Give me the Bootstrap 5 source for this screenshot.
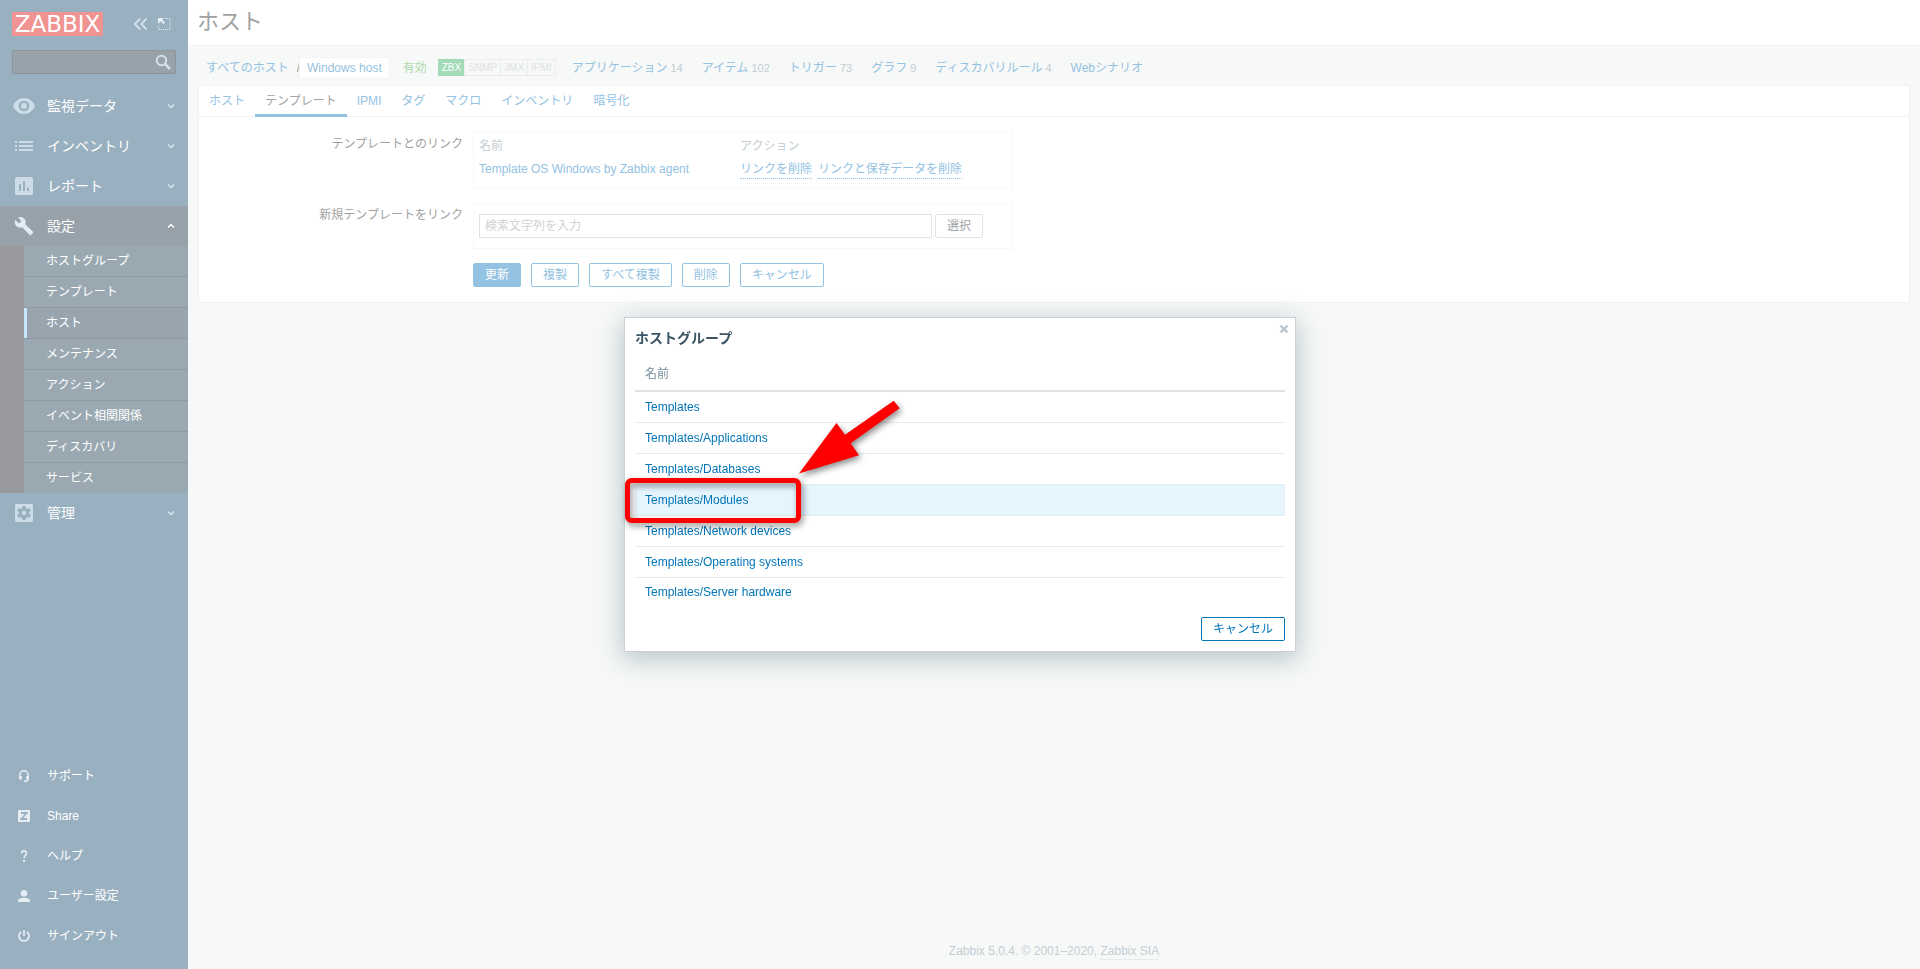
<!DOCTYPE html>
<html lang="ja">
<head>
<meta charset="utf-8">
<meta name="viewport" content="width=device-width, initial-scale=1">
<title>ホスト - Zabbix</title>
<link href="https://cdn.jsdelivr.net/npm/bootstrap@5.3.0/dist/css/bootstrap.min.css" rel="stylesheet">
<style>
  :root { --link: #94c2e2; --line: #f1f3f3; --page: #f7f9f8; --muted: #c3cdd3; --text: #9fa2a3; --side: #99b0c0; }
  body { font-family: "Liberation Sans", "Noto Sans CJK JP", sans-serif; font-size: 12px; line-height: 16px; background: var(--page); color: var(--text); }
  a { color: var(--link); text-decoration: none; }
  svg { display: block; flex: none; }

  /* sidebar */
  .side { width: 188px; flex: none; background: var(--side); color: #fff; padding-bottom: 13px; }
  .side a { color: #fff; }
  .side-head { padding: 12px 17px 0 12px; height: 50px; }
  .logo { background: #f09393; width: 91px; height: 24px; font: 23px/25px "DejaVu Sans", sans-serif; color: #fff; text-align: center; }
  .side-search { margin: 0 12px 12px; height: 24px; background: #97a2aa; border: 1px solid #8f9598; border-radius: 2px; }
  .side-search input { background: none; border: 0; outline: 0; min-width: 0; color: #fff; }
  .side-link { height: 40px; padding: 0 14px 0 12px; font-size: 14px; line-height: 20px; }
  .side-link .ico, .foot-link .ico { width: 24px; margin-right: 11px; display: flex; justify-content: center; color: #cddce7; flex: none; }
  .side-link.open { background: #97a2aa; }
  .side-link.open .ico { color: #e0edf7; }
  .sub-list { background: #999a9e; padding-left: 24px; }
  .sub-list li { height: 31px; border-bottom: 1px solid #9298a0; background: #9aa9b1; }
  .sub-list li:last-child { height: 30px; border-bottom: 0; }
  .sub-list a { display: block; height: 30px; padding: 0 19px; border-left: 3px solid transparent; line-height: 30px; }
  .sub-list a.on { background: #98a5af; border-color: #c5e6fb; }
  .foot-link { height: 40px; padding: 0 12px; color: #f2f5f7; }
  .foot-link .ico { color: #e6edf2; }

  /* page header */
  .page-head { height: 46px; background: #fff; border-bottom: 1px solid #f0f2f2; padding: 0 9px; }
  .page-head h1 { font-size: 22px; line-height: 44px; font-weight: 400; margin: 0; color: var(--text); }
  .crumbs { height: 39px; padding: 4px 18px 0; line-height: 20px; }
  .crumbs .here { background: #fff; padding: 0 7px; box-shadow: 0 0 0 1px #f3f5f5; }
  .crumbs .state { color: #afd9ae; margin: 0 12px 0 14px; }
  .crumbs .count { color: var(--muted); margin-left: 3px; font-size: 11px; }
  .crumb-links { column-gap: 19px; }
  .if-box { font-size: 10px; line-height: 16px; border: 1px solid #ebedee; color: #e0e2e3; margin-left: -1px; padding: 0 3px; height: 17px; }
  .if-box.on { background: #a3dbb8; border-color: #a3dbb8; color: #fff; }

  /* form */
  .panel { background: #fff; border: 1px solid var(--line); margin: 0 10px; padding-bottom: 15px; }
  .tab-row { height: 31px; border-bottom: 1px solid var(--line); }
  .tab-row a { padding: 0 10px; height: 31px; border-bottom: 3px solid transparent; display: block; line-height: 30px; }
  .tab-row a.on { color: var(--text); border-color: var(--link); }
  .form-body { padding-top: 1px; }
  .form-line { gap: 9px; margin-top: 14px; }
  .form-line > .lab { width: 264px; text-align: right; flex: none; padding-top: 4px; line-height: 16px; }
  .frame { border: 1px solid #f6f7f7; width: 540px; padding: 5px; margin-left: 1px; }
  .frame.tall { padding-bottom: 9px; }
  .frame.pickrow { padding: 10px 5px; gap: 3px; }
  .link-table { width: 100%; }
  .link-table th { font-weight: 400; color: var(--muted); height: 16px; padding: 0; }
  .link-table td { padding: 6px 0 0; line-height: 17px; }
  .link-table th:first-child { width: 261px; }
  .dotted { border-bottom: 1px dotted var(--link); display: inline-block; line-height: 18px; margin-right: 6px; }
  .find { width: 453px; height: 24px; border: 1px solid #dfe4e7; padding: 0 5px; outline: 0; }
  .find::placeholder { color: #d0d2d3; opacity: 1; }
  .btn-line { gap: 10px; margin-left: 1px; }
  .zbtn { height: 24px; font-size: 12px; line-height: 20px; padding: 0 11px; border-radius: 2px; --bs-btn-border-color: var(--link); --bs-btn-color: var(--link); background: #fff; }
  .zbtn.fill { background: var(--link); color: #fff; }
  .zbtn.grey { --bs-btn-border-color: #dfe4e7; --bs-btn-color: var(--text); }
  .zbtn.strong { --bs-btn-border-color: #0275b8; --bs-btn-color: #0275b8; }
  .page-foot { color: var(--muted); padding-bottom: 9px; line-height: 18px; }
  .page-foot a { color: var(--muted); border-bottom: 1px solid #e6eaea; display: inline-block; line-height: 15px; }

  /* dialogue */
  .dlg { --bs-modal-width: 672px; }
  .dlg .modal-content { border: 1px solid #c9d3d7; border-radius: 0; padding: 0 10px 10px; box-shadow: 0 6px 24px 2px rgba(70, 100, 115, .34); }
  .dlg h2 { font-size: 14px; font-weight: 700; line-height: 20px; margin: 10px 0 12px; color: #3c5563; }
  .dlg .btn-x { position: absolute; top: 6px; right: 6px; padding: 0; border: 0; background: none; color: #b9c5cc; }
  .pick { width: 100%; margin-bottom: 10px; }
  .pick th { font-weight: 400; color: #768d99; height: 31px; padding: 0 10px 2px; border-bottom: 2px solid #dce2e6; }
  .pick td { height: 31px; padding: 0 10px; border-bottom: 1px solid #e8ebed; }
  .pick tr:last-child td { border-bottom: 0; height: 30px; }
  .pick a { color: #0275b8; }
  .pick .hot { background: #e6f4fe; }
  .note { position: absolute; left: 0; top: 80px; pointer-events: none; filter: drop-shadow(2px 3px 3px rgba(0, 0, 0, .45)); }
</style>
</head>
<body>
<div class="d-flex min-vh-100">
  <aside class="side d-flex flex-column">
    <div class="side-head d-flex justify-content-between">
      <a href="#" class="logo">ZABBIX</a>
      <div class="d-flex gap-2 pt-1">
        <a href="#" aria-label="隠す"><svg width="18" height="16" viewBox="0 0 18 16" fill="none" stroke="#d9e5ee" stroke-width="1.800"><path d="M9 2.500 4 8 9 13.500M15.500 2.500 10.500 8 15.500 13.500"/></svg></a>
        <a href="#" aria-label="小さくする"><svg width="14" height="16" viewBox="0 0 14 16"><path d="M1 2h6L5.200 3.700 8 6.500 6.500 8 3.700 5.200 1 8z" fill="#e6eff5"/><path d="M8 2.500h5v11H1.500V9" fill="none" stroke="#e6eff5" stroke-dasharray="1 1"/></svg></a>
      </div>
    </div>
    <form class="side-search d-flex align-items-center">
      <input type="text" class="flex-fill" aria-label="検索">
      <svg width="22" height="20" viewBox="0 0 22 20" fill="none" stroke="#d5e2ec"><circle cx="8.500" cy="8.500" r="4.700" stroke-width="2"/><path d="m12 12 5 5" stroke-width="2.500"/></svg>
    </form>
    <nav>
      <a href="#" class="side-link d-flex align-items-center"><span class="ico"><svg width="22" height="16" viewBox="0 0 22 16"><path d="M11 0C6 0 1.800 3.300 0 8c1.800 4.700 6 8 11 8s9.200-3.300 11-8C20.200 3.300 16 0 11 0zm0 13.300a5.300 5.300 0 1 1 0-10.600 5.300 5.300 0 0 1 0 10.600zM11 5a3 3 0 1 0 0 6 3 3 0 0 0 0-6z" fill="currentColor"/></svg></span><span class="flex-fill">監視データ</span><svg width="6" height="6" viewBox="0 0 6 6"><path d="M0 1.500 3 4.500 6 1.500" fill="none" stroke="#d9e5ee" stroke-width="1.500"/></svg></a>
      <a href="#" class="side-link d-flex align-items-center"><span class="ico"><svg width="18" height="12" viewBox="0 0 18 12"><path d="M0 1h2v2H0zM4 1h14v2H4zM0 5h2v2H0zM4 5h14v2H4zM0 9h2v2H0zM4 9h14v2H4z" fill="currentColor"/></svg></span><span class="flex-fill">インベントリ</span><svg width="6" height="6" viewBox="0 0 6 6"><path d="M0 1.500 3 4.500 6 1.500" fill="none" stroke="#d9e5ee" stroke-width="1.500"/></svg></a>
      <a href="#" class="side-link d-flex align-items-center"><span class="ico"><svg width="18" height="18" viewBox="0 0 18 18"><path fill-rule="evenodd" d="M2 0h14a2 2 0 0 1 2 2v14a2 2 0 0 1-2 2H2a2 2 0 0 1-2-2V2a2 2 0 0 1 2-2zM4 7v7h2V7zM8 4v10h2V4zM12 10.500V14h2v-3.500z" fill="currentColor"/></svg></span><span class="flex-fill">レポート</span><svg width="6" height="6" viewBox="0 0 6 6"><path d="M0 1.500 3 4.500 6 1.500" fill="none" stroke="#d9e5ee" stroke-width="1.500"/></svg></a>
      <a href="#" class="side-link open d-flex align-items-center"><span class="ico"><svg width="20" height="20" viewBox="0 0 24 24"><path d="M22.700 19l-9.100-9.100c.9-2.300.4-5-1.500-6.900-2-2-5-2.400-7.400-1.300L9 6 6 9 1.600 4.700C.4 7.100.9 10.100 2.900 12.100c1.900 1.900 4.600 2.400 6.900 1.500l9.100 9.100c.4.4 1 .4 1.400 0l2.300-2.300c.5-.4.5-1.100.1-1.400z" fill="currentColor"/></svg></span><span class="flex-fill">設定</span><svg width="6" height="6" viewBox="0 0 6 6"><path d="M0 4.500 3 1.500 6 4.500" fill="none" stroke="#fff" stroke-width="1.500"/></svg></a>
      <ul class="sub-list list-unstyled mb-0">
        <li><a href="#">ホストグループ</a></li>
        <li><a href="#">テンプレート</a></li>
        <li><a href="#" class="on">ホスト</a></li>
        <li><a href="#">メンテナンス</a></li>
        <li><a href="#">アクション</a></li>
        <li><a href="#">イベント相関関係</a></li>
        <li><a href="#">ディスカバリ</a></li>
        <li><a href="#">サービス</a></li>
      </ul>
      <a href="#" class="side-link d-flex align-items-center"><span class="ico"><svg width="18" height="18" viewBox="0 0 18 18"><rect width="18" height="18" rx="1.500" fill="currentColor"/><g fill="#99b0c0"><circle cx="9" cy="9" r="5.200"/><path d="M7.200 2h3.600v14H7.200z"/><path d="M7.200 2h3.600v14H7.200z" transform="rotate(60 9 9)"/><path d="M7.200 2h3.600v14H7.200z" transform="rotate(120 9 9)"/></g><circle cx="9" cy="9" r="2.200" fill="currentColor"/></svg></span><span class="flex-fill">管理</span><svg width="6" height="6" viewBox="0 0 6 6"><path d="M0 1.500 3 4.500 6 1.500" fill="none" stroke="#d9e5ee" stroke-width="1.500"/></svg></a>
    </nav>
    <nav class="mt-auto">
      <a href="#" class="foot-link d-flex align-items-center"><span class="ico"><svg width="12" height="12" viewBox="0 0 12 12"><path d="M1.800 7.500V5a4.200 4.200 0 0 1 8.400 0v4.500L8.500 11.200H6" fill="none" stroke="currentColor" stroke-width="1.400"/><path d="M1 6h2.800v3.500H1zM8.200 6H11v3.500H8.200z" fill="currentColor"/></svg></span>サポート</a>
      <a href="#" class="foot-link d-flex align-items-center"><span class="ico"><svg width="12" height="12" viewBox="0 0 12 12"><rect width="12" height="12" rx="1" fill="currentColor"/><path d="M3 3h5.500L3.500 9H9" fill="none" stroke="#99b0c0" stroke-width="1.800"/></svg></span>Share</a>
      <a href="#" class="foot-link d-flex align-items-center"><span class="ico"><svg width="8" height="12" viewBox="0 0 8 12"><path d="M1.500 3.500C1.500 0 6.500.2 6.500 3.200 6.500 5.500 4 5.500 4 8.300" fill="none" stroke="currentColor" stroke-width="1.700"/><path d="M3 10h2v2H3z" fill="currentColor"/></svg></span>ヘルプ</a>
      <a href="#" class="foot-link d-flex align-items-center"><span class="ico"><svg width="12" height="12" viewBox="0 0 12 12" fill="currentColor"><circle cx="6" cy="3.200" r="3.200"/><path d="M0 12V10.500C0 8.500 3.500 7.700 6 7.700s6 .8 6 2.800V12z"/></svg></span>ユーザー設定</a>
      <a href="#" class="foot-link d-flex align-items-center"><span class="ico"><svg width="12" height="12" viewBox="0 0 12 12" fill="none" stroke="currentColor" stroke-width="1.700"><path d="M6 0v6M3 2A5 5 0 1 0 9 2"/></svg></span>サインアウト</a>
    </nav>
  </aside>

  <div class="flex-fill d-flex flex-column">
    <header class="page-head"><h1>ホスト</h1></header>
    <div class="crumbs d-flex align-items-center">
      <a href="#">すべてのホスト</a><span class="ms-2">/</span><a href="#" class="here">Windows host</a>
      <span class="state">有効</span>
      <div class="d-flex me-3"><span class="if-box on">ZBX</span><span class="if-box">SNMP</span><span class="if-box">JMX</span><span class="if-box">IPMI</span></div>
      <nav class="crumb-links d-flex">
        <span><a href="#">アプリケーション</a><span class="count">14</span></span>
        <span><a href="#">アイテム</a><span class="count">102</span></span>
        <span><a href="#">トリガー</a><span class="count">73</span></span>
        <span><a href="#">グラフ</a><span class="count">9</span></span>
        <span><a href="#">ディスカバリルール</a><span class="count">4</span></span>
        <a href="#">Webシナリオ</a>
      </nav>
    </div>
    <main class="panel">
      <nav class="tab-row d-flex">
        <a href="#">ホスト</a><a href="#" class="on">テンプレート</a><a href="#">IPMI</a><a href="#">タグ</a><a href="#">マクロ</a><a href="#">インベントリ</a><a href="#">暗号化</a>
      </nav>
      <form class="form-body">
        <div class="form-line d-flex">
          <span class="lab">テンプレートとのリンク</span>
          <div class="frame tall">
            <table class="link-table">
              <thead><tr><th>名前</th><th>アクション</th></tr></thead>
              <tbody><tr><td><a href="#">Template OS Windows by Zabbix agent</a></td><td><a href="#" class="dotted">リンクを削除</a><a href="#" class="dotted">リンクと保存データを削除</a></td></tr></tbody>
            </table>
          </div>
        </div>
        <div class="form-line d-flex">
          <label class="lab" for="tpl">新規テンプレートをリンク</label>
          <div class="frame pickrow d-flex">
            <input type="text" class="find" id="tpl" placeholder="検索文字列を入力">
            <button type="button" class="btn zbtn grey">選択</button>
          </div>
        </div>
        <div class="form-line d-flex">
          <span class="lab"></span>
          <div class="btn-line d-flex">
            <button type="button" class="btn zbtn fill">更新</button>
            <button type="button" class="btn zbtn">複製</button>
            <button type="button" class="btn zbtn">すべて複製</button>
            <button type="button" class="btn zbtn">削除</button>
            <button type="button" class="btn zbtn">キャンセル</button>
          </div>
        </div>
      </form>
    </main>
    <footer class="page-foot mt-auto text-center">Zabbix 5.0.4. © 2001–2020, <a href="#">Zabbix SIA</a></footer>
  </div>
</div>

<div class="modal dlg d-block" role="dialog" aria-labelledby="dlg-title">
  <div class="modal-dialog modal-dialog-centered">
    <div class="modal-content">
      <button type="button" class="btn-x" aria-label="閉じる"><svg width="10" height="10" viewBox="0 0 10 10"><path d="m1.500 1.500 7 7m0-7-7 7" stroke="currentColor" stroke-width="2.400"/></svg></button>
      <h2 id="dlg-title">ホストグループ</h2>
      <table class="pick">
        <thead><tr><th>名前</th></tr></thead>
        <tbody>
          <tr><td><a href="#">Templates</a></td></tr>
          <tr><td><a href="#">Templates/Applications</a></td></tr>
          <tr><td><a href="#">Templates/Databases</a></td></tr>
          <tr class="hot"><td><a href="#">Templates/Modules</a></td></tr>
          <tr><td><a href="#">Templates/Network devices</a></td></tr>
          <tr><td><a href="#">Templates/Operating systems</a></td></tr>
          <tr><td><a href="#">Templates/Server hardware</a></td></tr>
        </tbody>
      </table>
      <button type="button" class="btn zbtn strong align-self-end">キャンセル</button>
      <svg class="note" width="280" height="130" viewBox="0 0 280 130" aria-hidden="true"><path d="M174 75.500 211.500 25 220 36.700 268.700 2.700 274.700 10.300 225.700 45.300 234 57.300z" fill="#f00"/><rect x="2.500" y="82.500" width="171" height="40" rx="4" fill="none" stroke="#f00" stroke-width="5"/></svg>
    </div>
  </div>
</div>
<script src="https://cdn.jsdelivr.net/npm/bootstrap@5.3.0/dist/js/bootstrap.bundle.min.js"></script>
</body>
</html>
